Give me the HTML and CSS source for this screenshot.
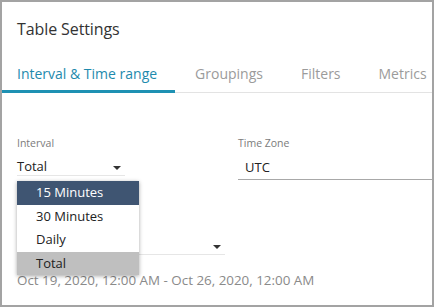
FILE: index.html
```html
<!DOCTYPE html>
<html>
<head>
<meta charset="utf-8">
<link rel="stylesheet" href="styles.css">
</head>
<body>
<div class="frame">
  <h1 class="title">Table Settings</h1>
  <div class="tabs">
    <div class="tab active">Interval &amp; Time range</div>
    <div class="tab">Groupings</div>
    <div class="tab">Filters</div>
    <div class="tab">Metrics</div>
  </div>
  <div class="form">
    <div class="row">
      <div class="field interval">
        <div class="label">Interval</div>
        <div class="select">
          <span>Total</span>
          <span class="caret"></span>
        </div>
        <ul class="menu">
          <li class="selected">15 Minutes</li>
          <li>30 Minutes</li>
          <li>Daily</li>
          <li class="current">Total</li>
        </ul>
      </div>
      <div class="field tz">
        <div class="label">Time Zone</div>
        <div class="input">UTC</div>
      </div>
    </div>
    <div class="range">
      <div class="select wide">
        <span>&nbsp;</span>
        <span class="caret"></span>
      </div>
      <div class="dates">Oct 19, 2020, 12:00 AM - Oct 26, 2020, 12:00 AM</div>
    </div>
  </div>
</div>
</body>
</html>
```
FILE: styles.css
```css
* { box-sizing: border-box; }
html, body { margin: 0; padding: 0; background: #fff; }
body { font-family: "Open Sans", "Noto Sans", sans-serif; }
.frame {
  width: 434px;
  height: 307px;
  border: 2px solid #a3a3a3;
  background: #fff;
  overflow: hidden;
}
.title {
  margin: 0;
  padding: 16px 0 0 15px;
  font-size: 16px;
  font-weight: 400;
  color: #333;
  line-height: 22px;
  letter-spacing: -0.1px;
}
.tabs {
  display: flex;
  margin-top: 23px;
  border-bottom: 1px solid #e3e3e3;
  height: 30px;
}
.tab {
  flex-shrink: 0;
  white-space: nowrap;
  font-size: 14px;
  color: #9b9b9b;
  padding: 0 18px 0 20px;
  line-height: 22px;
}
.tab:first-child { padding-left: 15px; }
.tab.active {
  color: #1e8aad;
  border-bottom: 3px solid #1e91b3;
  height: 30px;
  margin-bottom: -1px;
}
.form { padding: 0 0 0 15px; }
.row { display: flex; margin-top: 43px; }
.field { position: relative; }
.interval { width: 108px; }
.tz { margin-left: 113px; flex: 1; }
.label {
  font-size: 10.5px;
  color: #7b7b7b;
  line-height: 14px;
}
.select {
  display: flex;
  justify-content: space-between;
  align-items: center;
  margin-top: 6px;
  height: 20px;
  font-size: 13px;
  color: #222;
  border-bottom: 1px solid #e6e6e6;
  padding-right: 4px;
}
.caret {
  width: 0; height: 0;
  border-left: 4px solid transparent;
  border-right: 4px solid transparent;
  border-top: 4px solid #333;
  margin-top: 4px;
}
.input {
  margin-top: 6px;
  height: 24px;
  padding-top: 2px;
  font-size: 13px;
  color: #222;
  padding-left: 7px;
  border-bottom: 1px solid #a8a8a8;
}
.menu {
  position: absolute;
  left: 0;
  top: 45px;
  width: 122px;
  margin: 0;
  padding: 0;
  list-style: none;
  background: #fff;
  box-shadow: 0 1px 4px rgba(0,0,0,0.35);
  z-index: 2;
}
.menu li {
  height: 23.5px;
  line-height: 23.5px;
  padding-left: 19px;
  font-size: 13px;
  color: #222;
}
.menu li.selected { background: #3f5572; color: #fff; }
.menu li.current { background: #bfbfbf; }
.range { margin-top: 55px; width: 208px; }
.select.wide { margin-top: 0; }
.dates {
  margin-top: 16px;
  font-size: 13.4px;
  line-height: 18px;
  color: #8a8a8a;
  white-space: nowrap;
}
```
